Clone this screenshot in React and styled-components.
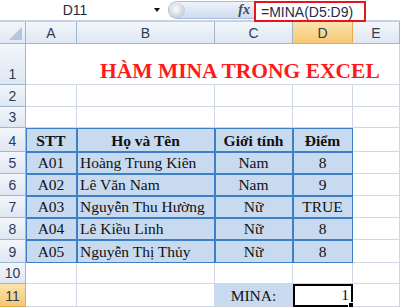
import React from "react";
import styled, { createGlobalStyle, css } from "styled-components";

const GlobalStyle = createGlobalStyle`
  html, body { margin: 0; padding: 0; background: #fff; }
  body {
    font-family: "Liberation Sans", Arial, sans-serif;
    width: 400px;
    height: 307px;
    overflow: hidden;
  }
`;

const COLS = ["A", "B", "C", "D", "E"];
const ROW_HEIGHTS = [41, 22, 21, 24, 22, 22, 22, 22, 23, 21, 23];
const GRID_LINE = "#d0d7e5";
const TABLE_LINE = "#3f7fc6";
const TABLE_FILL = "#c8daf0";

const people = [
  ["A01", "Hoàng Trung Kiên", "Nam", "8"],
  ["A02", "Lê Văn Nam", "Nam", "9"],
  ["A03", "Nguyễn Thu Hường", "Nữ", "TRUE"],
  ["A04", "Lê Kiều Linh", "Nữ", "8"],
  ["A05", "Nguyễn Thị Thủy", "Nữ", "8"],
];

const FormulaBar = styled.div`
  display: flex;
  height: 20px;
  background: #fff;
  border-bottom: 2px solid #c3d2e5;
`;

const NameBox = styled.div`
  width: 168px;
  display: flex;
  align-items: center;
  font-size: 14px;
  color: #1e2a3a;
  span { width: 150px; text-align: center; }
  i {
    width: 0;
    height: 0;
    margin-left: 4px;
    border-left: 3px solid transparent;
    border-right: 3px solid transparent;
    border-top: 4px solid #111;
  }
`;

const Handle = styled.div`
  width: 86px;
  display: flex;
  align-items: center;
  justify-content: space-between;
  margin: 1px 0;
  border-radius: 10px 0 0 10px;
  background: linear-gradient(#eef3fb, #cfdcee);
  border: 1px solid #a9bcd6;
  border-right: none;
  box-sizing: border-box;
  padding: 0 4px 0 1px;
`;

const Knob = styled.div`
  width: 15px;
  height: 15px;
  border-radius: 50%;
  background: radial-gradient(circle at 40% 40%, #fdfdfd, #c9ced6 70%, #9aa6b6);
`;

const Fx = styled.span`
  font-family: "Liberation Serif", serif;
  font-style: italic;
  font-weight: 700;
  font-size: 14px;
  color: #3d4a5c;
`;

const FormulaInput = styled.div`
  width: 112px;
  height: 21px;
  margin-top: 1px;
  box-sizing: border-box;
  border: 2px solid #e8141c;
  display: flex;
  align-items: center;
  padding-left: 5px;
  font-size: 14px;
  color: #1d2b4f;
  position: relative;
  z-index: 1;
  background: #fff;
`;

const Sheet = styled.div`
  display: grid;
  grid-template-columns: 26px 51px 138px 78px 60px 1fr;
  grid-template-rows: 22px ${ROW_HEIGHTS.map((h) => `${h}px`).join(" ")};
`;

const headerBg = css`
  background: ${(p) =>
    p.$active
      ? "linear-gradient(#fbe3b0, #f5c873)"
      : "linear-gradient(#f3f6fb, #dfe7f2)"};
  border-right: 1px solid ${(p) => (p.$active ? "#e9a949" : "#9eb6ce")};
  border-bottom: 1px solid ${(p) => (p.$active ? "#e9a949" : "#9eb6ce")};
  box-sizing: border-box;
  color: #2a3c55;
  font-size: 14px;
  display: flex;
  justify-content: center;
`;

const Corner = styled.div`
  ${headerBg};
  position: relative;
  &::after {
    content: "";
    position: absolute;
    right: 3px;
    bottom: 3px;
    border-left: 13px solid transparent;
    border-bottom: 13px solid #b4c6dc;
  }
`;

const ColHeader = styled.div`
  ${headerBg};
  align-items: center;
`;

const RowHeader = styled.div`
  ${headerBg};
  align-items: flex-end;
  padding-bottom: 2px;
`;

const Cell = styled.div`
  display: flex;
  align-items: flex-end;
  justify-content: ${(p) =>
    p.$align === "left" ? "flex-start" : p.$align === "right" ? "flex-end" : "center"};
  padding: 0 3px 1px;
  box-sizing: border-box;
  font-family: "Liberation Serif", "Times New Roman", serif;
  font-size: 15.5px;
  line-height: 19px;
  color: #111;
  white-space: nowrap;
  overflow: hidden;
  position: relative;
  background: ${(p) => (p.$fill ? TABLE_FILL : "#fff")};
  font-weight: ${(p) => (p.$bold ? 700 : 400)};
  border-right: 1px solid ${GRID_LINE};
  border-bottom: 1px solid ${GRID_LINE};
  ${(p) =>
    p.$table &&
    css`
      border-color: ${TABLE_LINE};
      box-shadow: inset 1px 1px 0 ${TABLE_LINE};
    `}
`;

const Title = styled(Cell)`
  grid-column: 2 / -1;
  justify-content: flex-start;
  padding: 0 0 3px 74px;
  font-size: 21.5px;
  font-weight: 700;
  color: #ff1a1a;
`;

const ActiveCell = styled(Cell)`
  overflow: visible;
  border: 2px solid #000;
  padding-right: 2px;
  &::after {
    content: "";
    position: absolute;
    right: -4px;
    bottom: -4px;
    width: 5px;
    height: 5px;
    background: #000;
    border: 1px solid #fff;
  }
`;

function Blank({ n = 5 }) {
  return Array.from({ length: n }, (_, i) => <Cell key={i} />);
}

export default function App() {
  return (
    <>
      <GlobalStyle />
      <FormulaBar>
        <NameBox>
          <span>D11</span>
          <i />
        </NameBox>
        <Handle>
          <Knob />
          <Fx>fx</Fx>
        </Handle>
        <FormulaInput>=MINA(D5:D9)</FormulaInput>
      </FormulaBar>
      <Sheet>
        <Corner />
        {COLS.map((c) => (
          <ColHeader key={c} $active={c === "D"}>
            {c}
          </ColHeader>
        ))}

        <RowHeader>1</RowHeader>
        <Title>HÀM MINA TRONG EXCEL</Title>

        <RowHeader>2</RowHeader>
        <Blank />
        <RowHeader>3</RowHeader>
        <Blank />

        <RowHeader>4</RowHeader>
        {["STT", "Họ và Tên", "Giới tính", "Điểm"].map((h) => (
          <Cell key={h} $table $fill $bold>
            {h}
          </Cell>
        ))}
        <Cell />

        {people.map((row, i) => (
          <React.Fragment key={row[0]}>
            <RowHeader>{i + 5}</RowHeader>
            {row.map((v, j) => (
              <Cell key={j} $table $fill $align={j === 1 ? "left" : "center"}>
                {v}
              </Cell>
            ))}
            <Cell />
          </React.Fragment>
        ))}

        <RowHeader>10</RowHeader>
        <Blank />

        <RowHeader $active>11</RowHeader>
        <Cell />
        <Cell />
        <Cell $fill>MINA:</Cell>
        <ActiveCell $align="right">1</ActiveCell>
        <Cell />
      </Sheet>
    </>
  );
}
